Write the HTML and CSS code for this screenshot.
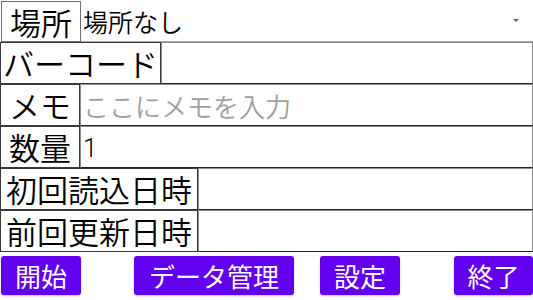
FILE: index.html
```html
<!DOCTYPE html>
<html lang="ja">
<head>
<meta charset="utf-8">
<link rel="stylesheet" href="styles.css">
</head>
<body>
<div class="form">
  <div class="row">
    <div class="label label-place">場所</div>
    <div class="spinner"><span class="spinner-text">場所なし</span><span class="arrow"></span></div>
  </div>
  <div class="row">
    <div class="label w161">バーコード</div>
    <div class="field"></div>
  </div>
  <div class="row">
    <div class="label w80">メモ</div>
    <div class="field hint">ここにメモを入力</div>
  </div>
  <div class="row">
    <div class="label w80">数量</div>
    <div class="field value">1</div>
  </div>
  <div class="row">
    <div class="label w198">初回読込日時</div>
    <div class="field"></div>
  </div>
  <div class="row">
    <div class="label w198">前回更新日時</div>
    <div class="field"></div>
  </div>
</div>
<div class="buttons">
  <button class="btn btn-start">開始</button>
  <button class="btn btn-data">データ管理</button>
  <button class="btn btn-settings">設定</button>
  <button class="btn btn-exit">終了</button>
</div>
</body>
</html>
```
FILE: styles.css
```css
html, body {
  margin: 0;
  padding: 0;
  background: #ffffff;
}
body {
  width: 533px;
  height: 300px;
  overflow: hidden;
  font-family: "Roboto", "Noto Sans CJK JP", sans-serif;
  color: #000;
}
.form {
  display: flex;
  flex-direction: column;
}
.row {
  display: flex;
  height: 42px;
}
.label {
  box-sizing: border-box;
  height: 42px;
  border: 1px solid #3a3a3a;
  font-family: "Noto Sans CJK JP", sans-serif;
  font-weight: 350;
  font-size: 31px;
  line-height: 40px;
  text-align: center;
  white-space: nowrap;
  flex: none;
}
.label-place {
  width: 80px;
  height: 41px;
  margin: 1px 0 0 1px;
  border-color: #6e6e6e;
  line-height: 39px;
}
.w80 { width: 80px; }
.w161 { width: 161px; }
.w198 { width: 198px; }
.spinner {
  flex: 1;
  box-sizing: border-box;
  height: 42px;
  border-bottom: 1px solid #a8a8a8;
  display: flex;
  align-items: center;
  justify-content: space-between;
  padding: 0 14px 0 2px;
}
.spinner-text {
  font-family: "Noto Sans CJK JP", sans-serif;
  font-weight: 350;
  font-size: 25px;
  line-height: 40px;
}
.arrow {
  width: 0;
  height: 0;
  border-left: 3px solid transparent;
  border-right: 3px solid transparent;
  border-top: 3px solid #666;
}
.field {
  flex: 1;
  box-sizing: border-box;
  height: 42px;
  border: 1px solid #8c8c8c;
  border-bottom-color: #222;
  font-size: 26px;
  line-height: 42px;
  padding-left: 2px;
  white-space: nowrap;
  overflow: hidden;
}
.hint {
  color: #9e9e9e;
  font-family: "Noto Sans CJK JP", sans-serif;
  font-weight: 350;
}
.value {
  font-family: "Roboto", sans-serif;
  font-weight: 300;
}
.buttons {
  display: flex;
  margin-top: 4px;
  height: 40px;
}
.btn {
  box-sizing: border-box;
  height: 39px;
  border: none;
  border-radius: 3px;
  background: #6200ee;
  color: #fff;
  font-family: "Noto Sans CJK JP", sans-serif;
  font-weight: 400;
  font-size: 26px;
  line-height: 39px;
  padding: 0;
  margin: 0;
  box-shadow: 0 1px 2px rgba(0,0,0,0.25);
}
.btn-start { width: 80px; margin-left: 1px; }
.btn-data { width: 160px; margin-left: 53px; }
.btn-settings { width: 80px; margin-left: 26px; }
.btn-exit { width: 79px; margin-left: 54px; }
```
